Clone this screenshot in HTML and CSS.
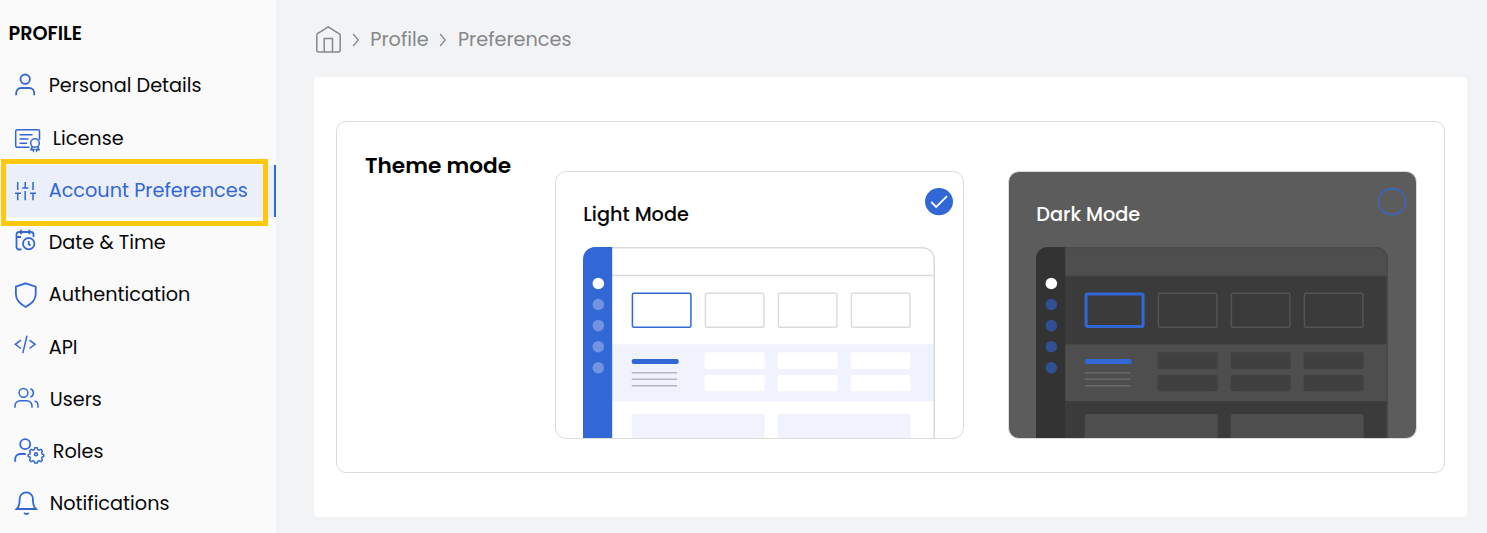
FILE: index.html
```html
<!DOCTYPE html>
<html lang="en">
<head>
<meta charset="utf-8">
<title>Account Preferences</title>
<link rel="stylesheet" href="styles.css">
</head>
<body>
<div class="app">
  <aside class="sidebar">
    <h2 class="sidebar-title">PROFILE</h2>
    <nav class="menu">
      <a class="item first"><svg class="icon" width="34" height="32" viewBox="0 0 34 32"><circle cx="10.2" cy="9.200" r="4.700"/><path d="M1.200 25.200v-2.200a5 5 0 0 1 5-5h8a5 5 0 0 1 5 5v2.200"/></svg><span>Personal Details</span></a>
      <a class="item"><svg class="icon thin" width="38" height="32" viewBox="0 0 38 32"><path d="M14.500 24.300H2.200a1.500 1.500 0 0 1-1.500-1.500V8.300a1.500 1.500 0 0 1 1.500-1.500H23a1.500 1.500 0 0 1 1.500 1.500V17M4.500 11.700h13M4.500 15.900h9M4.500 20.200h7.500"/><circle cx="20" cy="20" r="4.300"/><path d="M17.300 23.400l-1.300 3.200 1.600-.2.800 1.500.8-2.200M22.700 23.400l1.300 3.200-1.600-.2-.8 1.500-.8-2.200"/></svg><span>License</span></a>
      <a class="item active"><svg class="icon thin" width="34" height="32" viewBox="0 0 34 32"><path d="M2.700 7v8M0 18.300h6M2.700 18.300v7M10.200 7v6M7.200 13h6.200M10.200 16v9.300M18 7v8M15 18.300h6M18 18.300v7"/></svg><span>Account Preferences</span></a>
      <a class="item"><svg class="icon" width="34" height="32" viewBox="0 0 34 32"><path d="M6.500 22.500H4a2.500 2.500 0 0 1-2.500-2.500V7.500A2.500 2.500 0 0 1 4 5h12a2.500 2.500 0 0 1 2.500 2.500V10M1.500 10H6M6 2.800v4.500M14.300 2.800v4.500"/><circle cx="13.700" cy="16.700" r="5.700"/><path d="M13.700 14v3l1.800 1.500"/></svg><span>Date &amp; Time</span></a>
      <a class="item"><svg class="icon" width="34" height="32" viewBox="0 0 34 32"><path d="M10.700 4.300l10 3.300v7.700c0 6-4.500 9.700-10 12.700C5.200 25 .9 21.300.9 15.300V7.600z"/></svg><span>Authentication</span></a>
      <a class="item"><svg class="icon thin" width="34" height="32" viewBox="0 0 34 32"><path d="M6 9.200L.3 13.300 6 17.500M14.500 9.200l5.600 4.100-5.600 4.200M12 4.800L7.800 22.100"/></svg><span>API</span></a>
      <a class="item"><svg class="icon thin" width="35" height="32" viewBox="0 0 35 32"><circle cx="8.500" cy="8.800" r="4.400"/><path d="M0 23.700v-2a5 5 0 0 1 5-5h7a5 5 0 0 1 5 5v2M15.300 4.700a4.400 4.400 0 0 1 0 8.400M19.500 16.900a4.500 4.500 0 0 1 3.500 4.500v2.300"/></svg><span>Users</span></a>
      <a class="item"><svg class="icon" width="38" height="32" viewBox="0 0 38 32"><circle cx="10.200" cy="8.200" r="5"/><path d="M.2 25.700V23a5 5 0 0 1 5-5h5.500"/><g class="gear" transform="translate(0 -.8)"><circle cx="21" cy="19" r="1.500"/><path d="M19.800 12.600h2.400l.5 1.800 1.500.6 1.600-.9 1.700 1.700-.9 1.600.6 1.500 1.500.4v2l-1.500.4-.6 1.500.9 1.600-1.700 1.700-1.600-.9-1.500.6-.5 1.500h-2.400l-.5-1.500-1.500-.6-1.600.9-1.700-1.700.9-1.600-.6-1.500-1.500-.4v-2l1.500-.4.6-1.500-.9-1.600 1.700-1.700 1.600.9 1.500-.6z"/></g></svg><span>Roles</span></a>
      <a class="item"><svg class="icon" width="35" height="32" viewBox="0 0 35 32"><path d="M1.600 21c2-2 3-4.500 3-8.300V11a6.700 6.700 0 0 1 13.400 0v1.700c0 3.800 1 6.300 3 8.300zM9 24.900q2.400 2.300 4.800 0"/></svg><span>Notifications</span></a>
    </nav>
    <div class="highlight"></div>
  </aside>
  <main class="main">
    <nav class="crumbs">
      <svg class="home" width="28" height="30" viewBox="0 0 28 30"><path d="M2.800 10.200L14.200 2.800l11.500 7.400q.5.500.5 1.500v14.200q0 2-2 2H4.800q-2 0-2-2V11.700q0-1 .5-1.500M10.200 27.500v-13h8.300v13"/></svg>
      <svg class="chevron" width="8" height="14" viewBox="0 0 8 14"><path d="M1.200 1L6.200 7l-5 6"/></svg>
      <span class="crumb first">Profile</span>
      <svg class="chevron second" width="8" height="14" viewBox="0 0 8 14"><path d="M1.200 1L6.200 7l-5 6"/></svg>
      <span class="crumb">Preferences</span>
    </nav>
    <section class="panel">
      <div class="theme">
        <h1 class="theme-title">Theme mode</h1>
        <div class="card light">
          <div class="card-head"><span>Light Mode</span>
            <svg class="radio" width="28" height="28" viewBox="0 0 28 28"><ellipse cx="14" cy="13.600" rx="14" ry="13.600" fill="#3267d6"/><path d="M6.300 14l4.900 5L22 8.200" fill="none" stroke="#fff" stroke-width="1.800"/></svg>
          </div>
          <svg class="preview" width="353" height="191" viewBox="0 0 353 191"><use href="#mock"/></svg>
        </div>
        <div class="card dark">
          <div class="card-head"><span>Dark Mode</span>
            <svg class="radio" width="28" height="28" viewBox="0 0 28 28"><ellipse cx="14" cy="13.500" rx="13.500" ry="13" fill="none" stroke="#3267d6" stroke-width="1.300"/></svg>
          </div>
          <svg class="preview" width="353" height="191" viewBox="0 0 353 191"><use href="#mock"/></svg>
        </div>
      </div>
    </section>
  </main>
</div>
<svg class="defs" width="0" height="0">
  <defs>
    <g id="mock">
      <path class="m-base" d="M12 0H340a12 12 0 0 1 12 12V191H0V12A12 12 0 0 1 12 0z"/>
      <path class="m-top" d="M29 0H340a12 12 0 0 1 12 12V29H29z"/>
      <path class="m-band" d="M29 97.300H351V154.200H29z"/>
      <path class="m-frame" d="M29 .8H339.500a11.700 11.700 0 0 1 11.700 11.700V191M29 28.400H351"/>
      <path class="m-side" d="M12 0H29.200V191H0V12A12 12 0 0 1 12 0z"/>
      <circle class="m-dot-on" cx="15.300" cy="36.500" r="5.800"/>
      <g class="m-dot"><circle cx="15.300" cy="57.500" r="5.800"/><circle cx="15.300" cy="78.600" r="5.800"/><circle cx="15.300" cy="99.700" r="5.800"/><circle cx="15.300" cy="120.800" r="5.800"/></g>
      <g class="m-box"><rect x="122.400" y="46.200" width="58.500" height="34" rx="1.500"/><rect x="195.400" y="46.200" width="58.500" height="34" rx="1.500"/><rect x="268.400" y="46.200" width="58.500" height="34" rx="1.500"/></g>
      <rect class="m-box-on" rx="1.500"/>
      <rect class="m-pill" x="48.700" y="112" width="47" height="4.900" rx="2"/>
      <path class="m-lines" d="M48.700 125.800H94M48.700 132.200H94M48.700 138.800H94"/>
      <g class="m-cell"><rect x="121.600" y="105.300" width="60" height="16.700" rx="2"/><rect x="194.600" y="105.300" width="60" height="16.700" rx="2"/><rect x="267.600" y="105.300" width="60" height="16.700" rx="2"/><rect x="121.600" y="128" width="60" height="16.300" rx="2"/><rect x="194.600" y="128" width="60" height="16.300" rx="2"/><rect x="267.600" y="128" width="60" height="16.300" rx="2"/></g>
      <g class="m-block"><rect x="48.700" y="167" width="133" height="30" rx="2"/><rect x="194.600" y="167" width="133" height="30" rx="2"/></g>
    </g>
  </defs>
</svg>
</body>
</html>
```
FILE: styles.css
```css
* { box-sizing: border-box; }
body { margin: 0; background: #f2f3f5; color: #080808; font-family: Poppins, Inter, "Open Sans", sans-serif; font-size: 19.250px; overflow: hidden; }
h1, h2 { margin: 0; white-space: nowrap; color: #000; }
span { white-space: nowrap; }
.app { display: flex; height: 533px; }
.sidebar { position: relative; width: 276px; flex: none; background: #fafafa; }
.sidebar-title { height: 60px; padding: 22px 0 0 8.500px; font-size: 19.200px; line-height: 23px; font-weight: 600; }
.menu { display: flex; flex-direction: column; padding-top: .4px; }
.item { display: flex; align-items: center; height: 52.200px; padding-left: 15px; flex: none; line-height: 28px; }
.item span { margin-left: -.3px; padding-top: .3px; }
.item.first span { padding-top: 0; padding-bottom: 1px; }
.icon { flex: none; fill: none; stroke: #3267d6; stroke-width: 1.800; overflow: visible; }
.icon.thin { stroke-width: 1.500; }
.gear { stroke-width: 1.500; stroke-linejoin: round; }
.active { background: #eaeff9; color: #3267d6; border-right: 2px solid #3267d6; }
.highlight { position: absolute; left: 1px; top: 159px; width: 267px; height: 67px; border: 5px solid #ffc80f; }
.main { flex: 1; padding: 0 20px 0 38px; }
.crumbs { display: flex; align-items: center; height: 77px; color: #868788; }
.home, .chevron { flex: none; fill: none; stroke: #868788; stroke-width: 1.500; }
.home { margin-left: -.4px; }
.chevron { margin-left: 10.700px; margin-right: 10px; margin-top: 2px; stroke-width: 1.300; }
.chevron.second { margin-right: 10.400px; }
.crumb { line-height: 28px; padding-top: 2px; }
.crumb.first { width: 58.500px; }
.panel { height: 440px; padding: 44px 22px; background: #fff; border-radius: 4px; }
.theme { display: flex; width: 1109px; height: 352px; border: 1px solid #dcdcde; border-radius: 10px; padding: 49px 0 0 28px; }
.theme-title { width: 190px; flex: none; margin-top: -20px; font-size: 21.700px; line-height: 30px; font-weight: 600; }
.card { width: 409px; height: 268px; border: 1px solid #dcdcdc; border-radius: 11px; overflow: hidden; padding-left: 27px; }
.card + .card { margin-left: 44px; }
.card-head { display: flex; justify-content: space-between; height: 75px; padding-right: 10px; font-weight: 500; }
.card-head span { margin: 29px 0 0 .3px; line-height: 28px; }
.radio { margin-top: 16px; }
.preview { display: block; }
.defs { display: block; }
.light { --base: #fff; --top: #fff; --side: #3267d6; --band: #f0f3fd; --frame: #dadadb; --dot: #7193e2; --box: #dcdcdd; --lines: #b4b7bf; --cell: #fff; }
.dark { background: #5c5c5c; color: #fff; --base: #3b3b3b; --top: #4e4e4e; --side: #333; --band: #4e4e4e; --frame: #4a4a4a; --dot: #315091; --box: #545454; --lines: #6a6a6a; --cell: #404040; }
.light { --on-width: 1.500px; --on-x: 49.400px; --on-y: 46.200px; --on-w: 58.500px; --on-h: 34px; }
.dark { --on-width: 3px; --on-x: 50.100px; --on-y: 47px; --on-w: 57px; --on-h: 32.400px; }
.m-base { fill: var(--base); }
.m-top { fill: var(--top); }
.m-band, .m-block { fill: var(--band); }
.m-frame { fill: none; stroke: var(--frame); stroke-width: 1.500; }
.m-side { fill: var(--side); }
.m-dot-on { fill: #fff; }
.m-dot { fill: var(--dot); }
.m-box { fill: none; stroke: var(--box); stroke-width: 1.500; }
.m-box-on { fill: none; stroke: #3267d6; stroke-width: var(--on-width); x: var(--on-x); y: var(--on-y); width: var(--on-w); height: var(--on-h); }
.m-pill { fill: #3267d6; }
.m-lines { stroke: var(--lines); stroke-width: 1.600; }
.m-cell { fill: var(--cell); }
```
